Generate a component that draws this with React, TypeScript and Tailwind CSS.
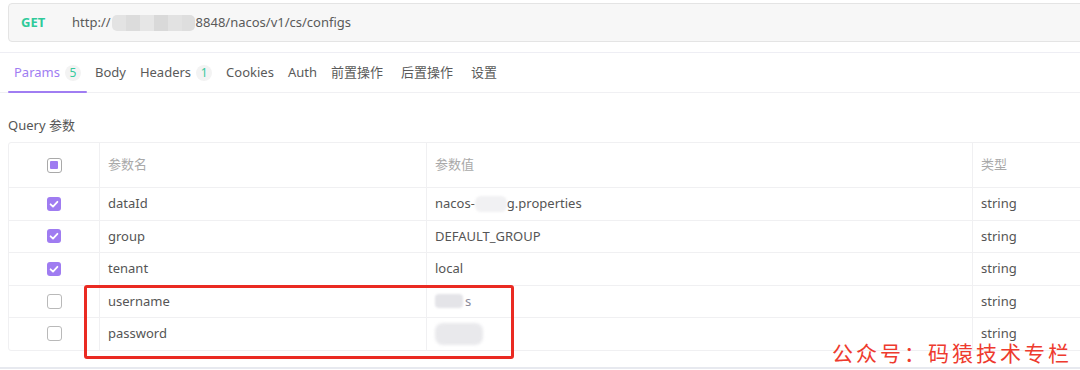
import React from "react";

const Check = () => (
  <span className="flex h-[14px] w-[14px] items-center justify-center rounded-[3px] bg-[#9f7cf1]">
    <svg width="14" height="14" viewBox="0 0 14 14">
      <polyline points="3.6,7.3 6,9.6 10.4,4.8" fill="none" stroke="#fff" strokeWidth="1.8" strokeLinecap="round" strokeLinejoin="round" />
    </svg>
  </span>
);

const Empty = () => (
  <span className="block h-[15px] w-[15px] rounded-[3px] border border-[#b9b9b9] bg-white" />
);

const Indeterminate = () => (
  <span className="flex h-[15px] w-[15px] items-center justify-center rounded-[3px] border-[1.5px] border-[#a9a9a9] bg-white">
    <span className="block h-[8px] w-[8px] rounded-[1px] bg-[#9f7cf1]" />
  </span>
);

const Badge = ({ n }: { n: string }) => (
  <span className="ml-[5px] flex h-[16px] w-[16px] items-center justify-center rounded-full bg-[#f3f3f3] text-[12px] text-[#35c99c]">
    {n}
  </span>
);

type Row = { checked: boolean; name: string; value: React.ReactNode };

const rows: Row[] = [
  {
    checked: true,
    name: "dataId",
    value: (
      <span className="flex items-center">
        nacos-
        <span className="inline-block h-[16px] w-[32px] rounded-[6px] bg-[#f1f1f3] blur-[1px]" />
        g.properties
      </span>
    ),
  },
  { checked: true, name: "group", value: "DEFAULT_GROUP" },
  { checked: true, name: "tenant", value: "local" },
  {
    checked: false,
    name: "username",
    value: (
      <span className="flex items-center">
        <span className="inline-block h-[14px] w-[28px] rounded-[4px] bg-[#e4e4e8] blur-[1px]" />
        <span className="ml-[2px] text-[#8a8a9a]">s</span>
      </span>
    ),
  },
  {
    checked: false,
    name: "password",
    value: (
      <span className="flex items-center">
        <span className="inline-block h-[22px] w-[48px] rounded-[8px] bg-[#e9e9ec] blur-[1.5px]" />
      </span>
    ),
  },
];

const tabs: { label: string; badge?: string; active?: boolean; cjk?: boolean }[] = [
  { label: "Params", badge: "5", active: true },
  { label: "Body" },
  { label: "Headers", badge: "1" },
  { label: "Cookies" },
  { label: "Auth" },
  { label: "前置操作", cjk: true },
  { label: "后置操作", cjk: true },
  { label: "设置", cjk: true },
];

export default function App() {
  return (
    <div className="relative h-[370px] w-[1080px] overflow-hidden bg-white font-['Noto_Sans','Noto_Sans_CJK_SC',sans-serif] text-[13px] text-[#555]">
      {/* URL bar */}
      <div className="pl-[8px] pt-[3px]">
        <div className="flex h-[39px] w-[1090px] items-center rounded-[4px] border border-[#e4e4e4] bg-[#f7f7f7]">
          <span className="ml-[12px] w-[51px] text-[13px] font-bold text-[#2fca9a]">GET</span>
          <span className="flex items-center text-[#5a5a5a]">
            http://
            <span className="mx-[1px] inline-flex h-[16px] w-[83px] overflow-hidden rounded-[5px] blur-[0.6px]">
              <span className="h-full w-[14px] bg-[#e3e3e3]" />
              <span className="h-full w-[14px] bg-[#dcdcdc]" />
              <span className="h-full w-[14px] bg-[#e6e6e6]" />
              <span className="h-full w-[14px] bg-[#d9d9d9]" />
              <span className="h-full w-[14px] bg-[#e2e2e2]" />
              <span className="h-full w-[13px] bg-[#dedede]" />
            </span>
            8848/nacos/v1/cs/configs
          </span>
        </div>
      </div>

      {/* Tabs */}
      <div className="mt-[10px] border-t border-[#eeeef4]">
        <div className="flex h-[40px] items-stretch border-b border-[#f0f0f3] pl-[8px]">
          {tabs.map((t) => (
            <div
              key={t.label}
              className={`relative flex items-center px-[6px] ${t.cjk ? "mr-[6px]" : "mr-[2px]"} ${t.active ? "text-[#a07df2]" : "text-[#5a5a5a]"}`}
            >
              <span>{t.label}</span>
              {t.badge && <Badge n={t.badge} />}
              {t.active && <span className="absolute bottom-[-1px] left-0 right-0 h-[2px] rounded-full bg-[#a07df2]" />}
            </div>
          ))}
        </div>
      </div>

      {/* Query label */}
      <div className="mt-[23px] flex h-[20px] items-center pl-[8px] text-[#555]">Query 参数</div>

      {/* Table */}
      <div className="ml-[8px] mt-[6px] w-[1090px] rounded-[3px] border border-[#f0f0f2]">
        <div className="grid h-[44px] grid-cols-[91px_327px_546px_1fr] items-stretch text-[#a9a9a9]">
          <div className="flex items-center justify-center border-r border-[#f0f0f2]">
            <Indeterminate />
          </div>
          <div className="flex items-center border-r border-[#f0f0f2] pl-[8px]">参数名</div>
          <div className="flex items-center border-r border-[#f0f0f2] pl-[8px]">参数值</div>
          <div className="flex items-center pl-[8px]">类型</div>
        </div>
        {rows.map((r) => (
          <div
            key={r.name}
            className="grid h-[32.5px] grid-cols-[91px_327px_546px_1fr] items-stretch border-t border-[#f0f0f2] text-[#555]"
          >
            <div className="flex items-center justify-center border-r border-[#f0f0f2]">
              {r.checked ? <Check /> : <Empty />}
            </div>
            <div className="flex items-center border-r border-[#f0f0f2] pl-[8px]">{r.name}</div>
            <div className="flex items-center border-r border-[#f0f0f2] pl-[8px]">{r.value}</div>
            <div className="flex items-center pl-[8px]">string</div>
          </div>
        ))}
      </div>

      {/* bottom rule */}
      <div className="absolute bottom-[1px] left-0 h-[2px] w-full bg-[#e7e9ef]" />

      {/* red highlight */}
      <div className="absolute left-[84px] top-[285px] h-[74px] w-[430px] rounded-[3px] border-[3px] border-[#ea2a22]" />

      {/* watermark */}
      <div className="absolute left-[832px] top-[338px] font-['Noto_Sans_CJK_SC',sans-serif] text-[21px] leading-[28px] tracking-[3px] text-[#ee3a2e]">
        公众号：码猿技术专栏
      </div>
    </div>
  );
}
